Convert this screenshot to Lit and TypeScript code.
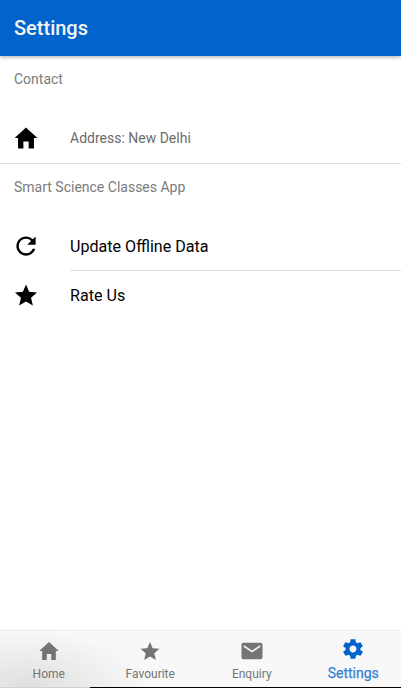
import { LitElement, html, css, svg } from "lit";
import { customElement } from "lit/decorators.js";
import { classMap } from "lit/directives/class-map.js";

const icons: Record<string, string> = {
  home: "M208 448V320h96v128h97.6V256H464L256 64 48 256h62.4v192z",
  refresh:
    "M256 388c-72.597 0-132-59.405-132-132 0-72.601 59.403-132 132-132 36.3 0 69.299 15.4 92.406 39.601L278 234h154V80l-51.698 51.702C348.406 99.798 304.406 80 256 80c-96.797 0-176 79.203-176 176s78.094 176 176 176c81.045 0 148.287-54.134 169.401-128H378.85c-18.745 49.561-67.138 84-122.85 84z",
  star: "M256 372.686L380.83 448l-33.021-142.066L458 210.409l-145.267-12.475L256 64l-56.743 133.934L54 210.409l110.192 95.525L131.161 448z",
  mail: "M437.332 80H74.668C51.199 80 32 99.198 32 122.667v266.666C32 412.802 51.199 432 74.668 432h362.664C460.801 432 480 412.802 480 389.333V122.667C480 99.198 460.801 80 437.332 80zM432 170.667L256 288 80 170.667V128l176 117.333L432 128v42.667z",
  settings:
    "M413.967 276.8c1.06-6.235 1.06-13.518 1.06-20.8s-1.06-13.518-1.06-20.8l44.667-34.318c4.26-3.118 5.319-8.317 2.13-13.518L418.215 115.6c-2.129-4.164-8.507-6.235-12.767-4.164l-53.186 20.801c-10.638-8.318-23.394-15.601-36.16-20.801l-7.448-55.117c-1.06-4.154-5.319-8.318-10.638-8.318h-85.098c-5.318 0-9.577 4.164-10.637 8.318l-8.508 55.117c-12.767 5.2-24.464 12.482-36.171 20.801l-53.186-20.801c-5.319-2.071-10.638 0-12.767 4.164L49.1 187.365c-2.119 4.153-1.061 10.399 2.129 13.518L96.97 235.2c0 7.282-1.06 13.518-1.06 20.8s1.06 13.518 1.06 20.8l-44.668 34.318c-4.26 3.118-5.318 8.317-2.13 13.518L92.721 396.4c2.13 4.164 8.508 6.235 12.767 4.164l53.187-20.801c10.637 8.318 23.394 15.601 36.16 20.801l8.508 55.117c1.069 5.2 5.318 8.318 10.637 8.318h85.098c5.319 0 9.578-4.164 10.638-8.318l8.518-55.117c12.757-5.2 24.464-12.482 36.16-20.801l53.187 20.801c5.318 2.071 10.637 0 12.767-4.164l42.549-71.765c2.129-4.153 1.06-10.399-2.13-13.518l-46.8-34.317zm-158.499 52c-41.489 0-74.46-32.235-74.46-72.8s32.971-72.8 74.46-72.8 74.461 32.235 74.461 72.8-32.972 72.8-74.461 72.8z",
};

const icon = (name: string) =>
  html`<svg class="icon" viewBox="0 0 512 512" aria-hidden="true">${svg`<path d=${icons[name]} />`}</svg>`;

const tabs = [
  { icon: "home", label: "Home" },
  { icon: "star", label: "Favourite" },
  { icon: "mail", label: "Enquiry" },
  { icon: "settings", label: "Settings", active: true },
];

@customElement("app-root")
export class AppRoot extends LitElement {
  static styles = css`
    :host {
      display: flex;
      flex-direction: column;
      height: 100vh;
      overflow: hidden;
      background: #fff;
      font-family: Roboto, sans-serif;
      color: #000;
    }
    .toolbar {
      flex: none;
      height: 56px;
      box-sizing: border-box;
      padding: 0 14px;
      display: flex;
      align-items: center;
      background: #0163cb;
      color: #f4f4f4;
      font-size: 20px;
      font-weight: 500;
      box-shadow: 0 1px 4px rgba(0, 0, 0, 0.35);
    }
    .content {
      flex: 1;
    }
    .group-title {
      height: 45px;
      padding: 0 14px;
      margin-bottom: 13px;
      display: flex;
      align-items: center;
      font-size: 14px;
      color: #7b7b7b;
    }
    .item {
      display: flex;
      height: 49px;
      padding-left: 12px;
    }
    .contact {
      border-bottom: 1px solid #dedede;
    }
    .item .icon {
      flex: none;
      width: 28px;
      height: 28px;
      margin-top: 10px;
      margin-right: 30px;
    }
    .label {
      flex: 1;
      box-sizing: border-box;
      display: flex;
      align-items: center;
      font-size: 16.1px;
    }
    .note {
      padding-bottom: 2px;
      font-size: 14px;
      color: #6c6c6c;
    }
    .lined {
      border-bottom: 1px solid #dedede;
    }
    .icon {
      display: block;
      fill: currentColor;
    }
    .tabs {
      flex: none;
      height: 57px;
      box-sizing: border-box;
      display: grid;
      grid-template-columns: repeat(4, 101.5px);
      margin: 0 -3px 0 -2px;
      border-top: 1px solid #ececec;
      background:
        radial-gradient(ellipse 120px 58px at 30px 100%, rgba(0, 0, 0, 0.1), rgba(0, 0, 0, 0)),
        #f8f8f8;
    }
    .tab {
      display: flex;
      flex-direction: column;
      align-items: center;
      padding-top: 8px;
      color: #747474;
      font-size: 12px;
      line-height: 14px;
    }
    .tab .icon {
      width: 24px;
      height: 24px;
      margin-bottom: 4px;
    }
    .active {
      padding-top: 6px;
      color: #0163cb;
      font-size: 14px;
      line-height: 16px;
    }
    .active span {
      -webkit-text-stroke: 0.25px currentColor;
      opacity: 0.8;
    }
    .edge {
      flex: none;
      height: 1px;
      background: linear-gradient(90deg, #d0d0d0 89px, #000 91px);
    }
  `;

  render() {
    return html`
      <header class="toolbar">Settings</header>
      <main class="content">
        <div class="group-title">Contact</div>
        <div class="item contact">
          ${icon("home")}
          <div class="label note">Address: New Delhi</div>
        </div>
        <div class="group-title">Smart Science Classes App</div>
        <div class="item">
          ${icon("refresh")}
          <div class="label lined">Update Offline Data</div>
        </div>
        <div class="item">
          ${icon("star")}
          <div class="label">Rate Us</div>
        </div>
      </main>
      <nav class="tabs">
        ${tabs.map(
          (t) => html`<div class=${classMap({ tab: true, active: !!t.active })}>
            ${icon(t.icon)}<span>${t.label}</span>
          </div>`
        )}
      </nav>
      <div class="edge"></div>
    `;
  }
}
